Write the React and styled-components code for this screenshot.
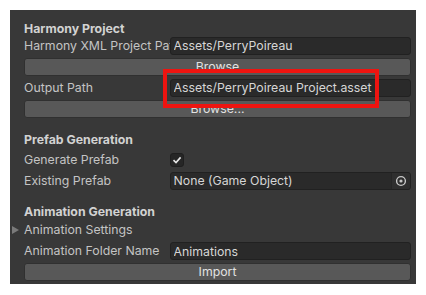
import React from "react";
import styled, { createGlobalStyle } from "styled-components";

const GlobalStyle = createGlobalStyle`
  html, body {
    margin: 0;
    padding: 0;
    background: #ffffff;
  }
  body {
    font-family: Inter, "Noto Sans", "Liberation Sans", sans-serif;
    font-size: 12.3px;
    -webkit-font-smoothing: antialiased;
  }
`;

const Panel = styled.div`
  position: relative;
  box-sizing: border-box;
  margin: 10px;
  width: 406px;
  height: 274px;
  background: #383838;
  padding: 9.5px 5px 0 14px;
  display: flex;
  flex-direction: column;
  gap: 13px;
  overflow: hidden;
`;

const Section = styled.div`
  display: flex;
  flex-direction: column;
  gap: 3px;
`;

const Heading = styled.div`
  height: 17px;
  line-height: 17px;
  margin-bottom: ${({ $after }) => $after}px;
  font-weight: 700;
  color: #d2d2d2;
  white-space: nowrap;
`;

const Row = styled.div`
  position: relative;
  display: grid;
  grid-template-columns: 145.5px 1fr;
  align-items: center;
  height: 18px;
`;

const Label = styled.div`
  color: #c4c4c4;
  white-space: nowrap;
  overflow: hidden;
  line-height: 18px;
`;

const Field = styled.div`
  box-sizing: border-box;
  height: 18px;
  display: flex;
  align-items: center;
  background: #2a2a2a;
  border: 1px solid #212121;
  border-radius: 3px;
  padding-left: 3px;
  color: #d6d6d6;
  white-space: nowrap;
  overflow: hidden;
`;

const FieldText = styled.span`
  flex: 1;
  overflow: hidden;
`;

const Picker = styled.span`
  width: 18px;
  height: 16px;
  display: flex;
  align-items: center;
  justify-content: center;
  background: #2f2f2f;
  border-left: 1px solid #262626;
`;

const Button = styled.div`
  box-sizing: border-box;
  height: 18px;
  line-height: 16px;
  background: #585858;
  border: 1px solid #303030;
  border-radius: 3px;
  color: #e2e2e2;
  text-align: center;
  white-space: nowrap;
`;

const Checkbox = styled.span`
  box-sizing: border-box;
  width: 14px;
  height: 14px;
  display: flex;
  align-items: center;
  justify-content: center;
  background: #262626;
  border: 1px solid #1f1f1f;
  border-radius: 3px;
`;

const Foldout = styled.span`
  position: absolute;
  left: -12px;
  top: 5px;
  width: 0;
  height: 0;
  border-top: 4px solid transparent;
  border-bottom: 4px solid transparent;
  border-left: 7px solid #7a7a7a;
`;

const Highlight = styled.div`
  position: absolute;
  left: 153px;
  top: 59px;
  width: 216px;
  height: 39px;
  box-sizing: border-box;
  border: 4px solid #ee1410;
  pointer-events: none;
`;

const PickerIcon = () => (
  <svg width="12" height="12" viewBox="0 0 12 12">
    <circle cx="6" cy="6" r="4.4" fill="none" stroke="#c8c8c8" strokeWidth="1.4" />
    <circle cx="6" cy="6" r="1.6" fill="#c8c8c8" />
  </svg>
);

const Check = () => (
  <svg width="10" height="10" viewBox="0 0 10 10">
    <path d="M1.5 5.2 L4 7.6 L8.6 2.4" fill="none" stroke="#e6e6e6" strokeWidth="1.6" />
  </svg>
);

export default function App() {
  return (
    <>
      <GlobalStyle />
      <Panel>
        <Section>
          <Heading $after={-3}>Harmony Project</Heading>
          <Row>
            <Label>Harmony XML Project Path</Label>
            <Field>
              <FieldText>Assets/PerryPoireau</FieldText>
            </Field>
          </Row>
          <Button>Browse</Button>
          <Row>
            <Label>Output Path</Label>
            <Field>
              <FieldText>Assets/PerryPoireau Project.asset</FieldText>
            </Field>
          </Row>
          <Button>Browse...</Button>
        </Section>

        <Section>
          <Heading $after={0}>Prefab Generation</Heading>
          <Row>
            <Label>Generate Prefab</Label>
            <Checkbox>
              <Check />
            </Checkbox>
          </Row>
          <Row>
            <Label>Existing Prefab</Label>
            <Field>
              <FieldText>None (Game Object)</FieldText>
              <Picker>
                <PickerIcon />
              </Picker>
            </Field>
          </Row>
        </Section>

        <Section>
          <Heading $after={-1.5}>Animation Generation</Heading>
          <Row>
            <Foldout />
            <Label>Animation Settings</Label>
          </Row>
          <Row>
            <Label>Animation Folder Name</Label>
            <Field>
              <FieldText>Animations</FieldText>
            </Field>
          </Row>
          <Button>Import</Button>
        </Section>

        <Highlight />
      </Panel>
    </>
  );
}
